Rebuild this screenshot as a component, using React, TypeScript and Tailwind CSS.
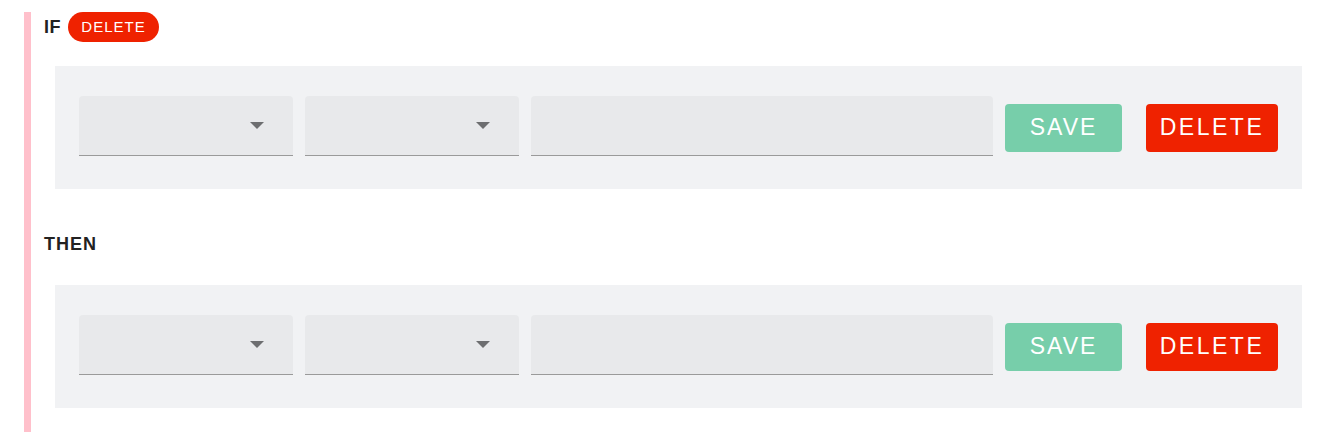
import React from 'react';

const FONT = "font-['Liberation_Sans',Arial,sans-serif]";

function SelectField() {
  return (
    <div className="relative h-[60px] w-[214px] shrink-0 rounded-t-[4px] border-b border-[#9a9a9a] bg-[#e8e9eb]">
      <svg
        className="absolute right-[29px] top-[26px]"
        width="14"
        height="7"
        viewBox="0 0 14 7"
      >
        <path d="M0 0 L14 0 L7 7 Z" fill="#6d6e70" />
      </svg>
    </div>
  );
}

function RuleRow() {
  return (
    <div className="ml-[11px] flex items-start bg-[#f1f2f4] px-[24px] pb-[33px] pt-[30px]">
      <SelectField />
      <div className="ml-[12px]">
        <SelectField />
      </div>
      <div className="ml-[12px] h-[60px] flex-1 rounded-t-[4px] border-b border-[#9a9a9a] bg-[#e8e9eb]" />
      <button
        type="button"
        className="ml-[12px] mt-[8px] h-[48px] w-[117px] shrink-0 rounded-[4px] bg-[#77ceaa] pb-[2px] text-[23px] tracking-[2px] text-white"
      >
        SAVE
      </button>
      <button
        type="button"
        className="ml-[24px] mt-[8px] h-[48px] w-[132px] shrink-0 rounded-[4px] bg-[#ef2200] pb-[2px] text-[23px] tracking-[2.5px] text-white"
      >
        DELETE
      </button>
    </div>
  );
}

export default function App() {
  return (
    <div className={`min-h-[444px] w-[1340px] bg-white pl-[24px] pr-[38px] pt-[12px] ${FONT}`}>
      <div className="border-l-[7px] border-[#ffc0cb] pb-[24px] pl-[13px]">
        <div className="flex h-[30px] items-center">
          <span className="text-[18px] font-bold tracking-[0.5px] text-[#222]">IF</span>
          <span className="ml-[7px] flex h-[30px] w-[91px] items-center justify-center rounded-full bg-[#ef2200] text-[15px] tracking-[1px] text-white">
            DELETE
          </span>
        </div>
        <div className="mt-[24px]">
          <RuleRow />
        </div>
        <div className="mt-[40px] flex h-[30px] items-center">
          <span className="text-[18px] font-bold tracking-[1px] text-[#222]">THEN</span>
        </div>
        <div className="mt-[26px]">
          <RuleRow />
        </div>
      </div>
    </div>
  );
}
